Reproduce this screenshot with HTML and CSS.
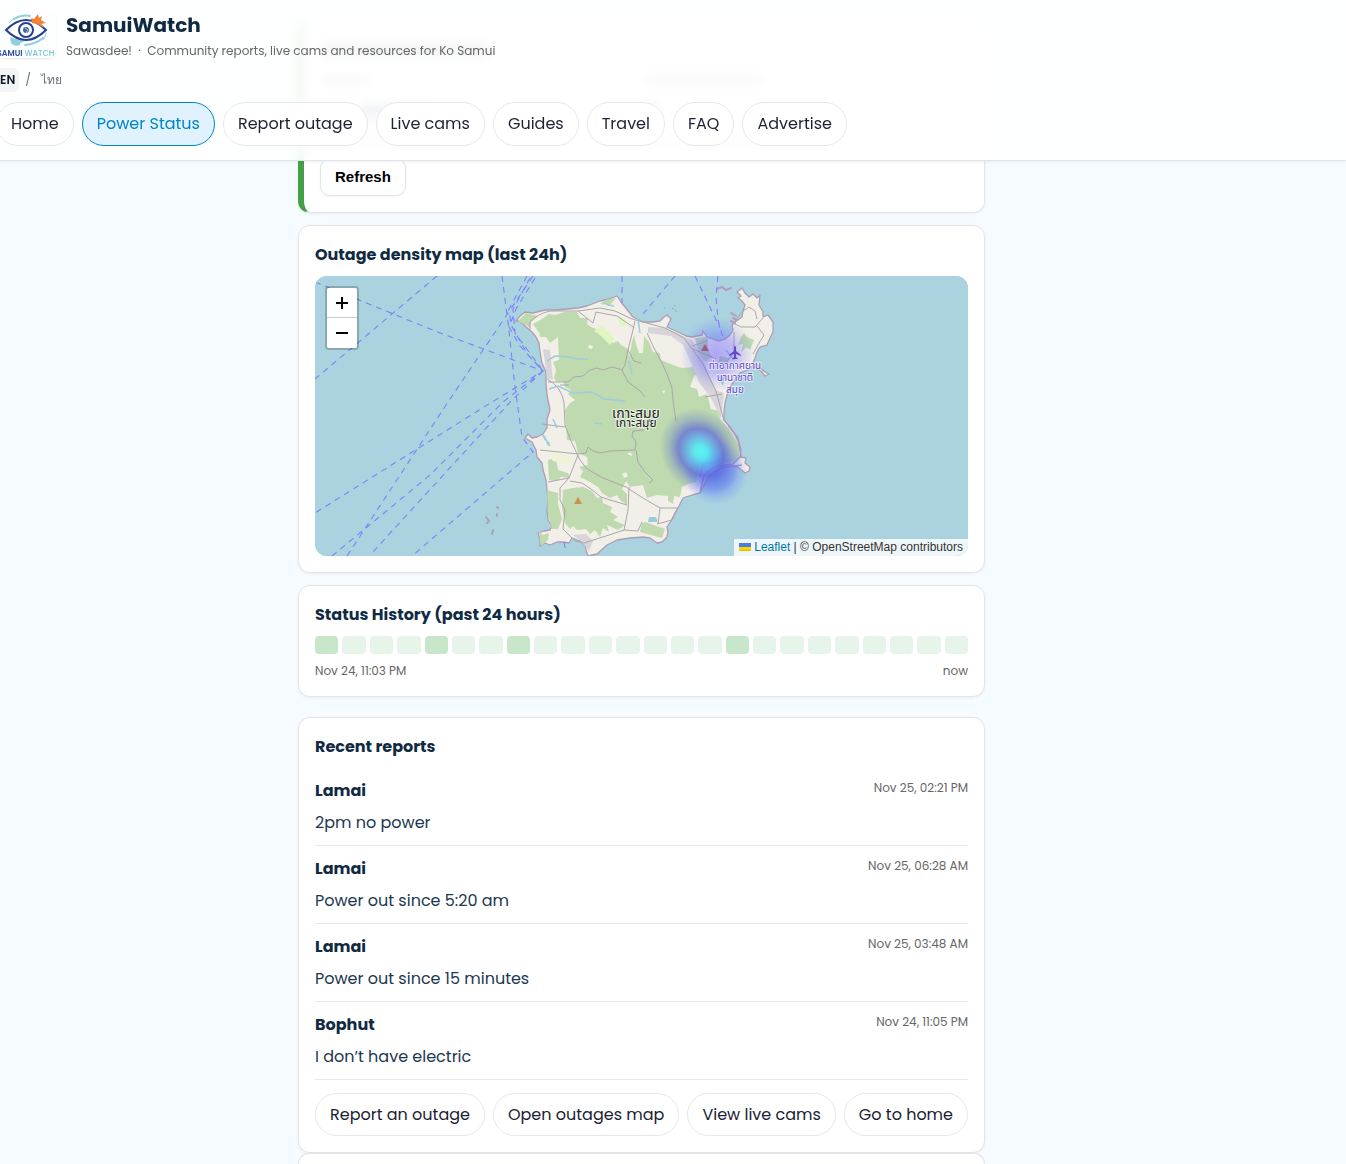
FILE: index.html
```html
<!DOCTYPE html>
<html lang="en">
<head>
<meta charset="utf-8">
<meta name="viewport" content="width=device-width, initial-scale=1">
<title>SamuiWatch</title>
<link rel="stylesheet" href="styles.css">
</head>
<body>
<header class="site-header">
  <div class="brand">
    <svg class="logo" viewBox="0 0 60 48" aria-hidden="true">
      <rect width="60" height="48" fill="#fdfeff"/>
      <g fill="none" stroke="#8fd0dc" stroke-linecap="round">
        <path d="M18 9Q26 4 34 6" stroke-width="2"/>
        <path d="M13 13Q17 8 22 7" stroke-width="1"/>
        <path d="M29 35Q40 34 47 28" stroke-width="2"/>
        <path d="M50 23Q50 27 47 30" stroke-width="1"/>
      </g>
      <path d="M14 27L29 32Q23 32 24 35Q18 37 15 33Z" fill="#8fd0dc"/>
      <path d="M10 20Q30 0 50 20Q30 40 10 20Z" fill="#fff" stroke="#25408f" stroke-width="2"/>
      <path d="M36 13L35 8L38 9L42 4L43 8L46 6L45 10L50 13L45 14L48 18L41 14Z" fill="#f58233"/>
      <circle cx="30" cy="20" r="7" fill="#fff" stroke="#25408f" stroke-width="2"/>
      <circle cx="30" cy="20" r="3" fill="#4b62a4"/>
      <path d="M29 18L32 20L30 23" fill="none" stroke="#8fd0dc"/>
      <text class="logo-text" x="1" y="46"><tspan fill="#2f4a9b">SAMUI</tspan> <tspan fill="#7cc5d6" font-weight="500">WATCH</tspan></text>
    </svg>
    <div class="brand-copy">
      <div class="brand-name">SamuiWatch</div>
      <div class="tagline">Sawasdee! &nbsp;·&nbsp; Community reports, live cams and resources for Ko Samui</div>
    </div>
  </div>
  <div class="langs"><a class="lang lang-on" href="#en">EN</a><span class="slash">/</span><a class="lang" href="#th">ไทย</a></div>
  <nav class="nav">
    <a class="pill" href="#home">Home</a>
    <a class="pill pill-on" href="#power">Power Status</a>
    <a class="pill" href="#report">Report outage</a>
    <a class="pill" href="#cams">Live cams</a>
    <a class="pill" href="#guides">Guides</a>
    <a class="pill" href="#travel">Travel</a>
    <a class="pill" href="#faq">FAQ</a>
    <a class="pill" href="#ads">Advertise</a>
  </nav>
</header>

<main class="page">
  <section class="card card-status">
    <div class="ghost" aria-hidden="true">
      <i class="g-title"></i>
      <i class="g-label"></i><i class="g-label g-wide"></i>
      <i class="g-value"></i><i class="g-value g-digit"></i>
      <i class="g-note"></i><i class="g-note"></i>
    </div>
    <button class="refresh" type="button">Refresh</button>
  </section>

  <section class="card">
    <h2>Outage density map (last 24h)</h2>
    <div class="map">
      <svg class="map-art" viewBox="315 276 653 280" preserveAspectRatio="xMidYMid slice" role="img" aria-label="Map of Ko Samui">
        <defs>
          <radialGradient id="hot"><stop offset="0" stop-color="#4ff8f4" stop-opacity=".92"/><stop offset=".16" stop-color="#4fecf4" stop-opacity=".86"/><stop offset=".36" stop-color="#58a4ee" stop-opacity=".76"/><stop offset=".54" stop-color="#5a62da" stop-opacity=".7"/><stop offset=".76" stop-color="#5a68d0" stop-opacity=".3"/><stop offset="1" stop-color="#5a68d0" stop-opacity="0"/></radialGradient>
          <radialGradient id="warm"><stop offset="0" stop-color="#5570ff" stop-opacity=".75"/><stop offset=".5" stop-color="#5c76ff" stop-opacity=".5"/><stop offset="1" stop-color="#6a8cff" stop-opacity="0"/></radialGradient>
          <radialGradient id="mild"><stop offset="0" stop-color="#6058ff" stop-opacity=".48"/><stop offset=".5" stop-color="#6460ff" stop-opacity=".36"/><stop offset="1" stop-color="#6b78ff" stop-opacity="0"/></radialGradient>
        </defs>
        <rect x="315" y="276" width="653" height="280" fill="#aad3df"/>
        <path fill="#f2efe9" stroke="#ad9db4" stroke-width="1.3" stroke-linejoin="round" d="M516 321L520 316L525 312L533 313L545 310L556 310L567 309L578 308L587 306L600 301L609 299L617 296L621 302L625 307L629 312L633 317L643 322L652 322L660 321L664 317L667 315L671 319L669 323L667 327L680 333L686 336L692 337L702 335L703 331L707 337L713 339L718 341L725 339L730 335L733 330L732 325L735 322L742 317L743 311L745 305L742 301L738 298L741 296L737 292L742 288L745 293L749 297L753 294L757 298L760 295L759 305L763 312L763 317L768 315L773 322L773 332L770 338L767 345L760 347L757 352L755 358L753 363L758 366L765 372L769 374L765 376L761 371L753 366L747 370L740 373L735 380L730 387L727 395L725 403L724 411L724 420L730 427L735 435L739 443L741 450L740 457L746 458L745 463L750 467L749 471L745 473L738 467L729 466L720 468L713 472L708 477L704 485L700 493L692 495L683 498L679 506L675 513L671 521L667 527L668 532L667 537L662 542L657 543L650 538L643 537L630 538L617 540L607 545L597 554L588 556L586 550L585 545L580 541L572 538L569 543L563 542L557 542L550 545L545 543L540 546L540 539L538 533L544 531L550 530L552 526L548 520L547 510L548 500L547 490L546 480L543 470L542 463L537 457L536 450L532 442L525 438L528 434L532 438L537 437L543 434L547 428L547 419L550 410L547 395L546 383L546 372L542 363L540 352L539 343L536 337L532 332L526 327L520 321Z"/>
        <g fill="#bedaae">
          <path d="M518 321L526 313L538 316L531 322L530 328L524 324ZM533 324L542 319L549 314L555 315L565 312L577 312L580 318L588 318L587 324L593 328L600 330L605 339L613 343L618 341L621 345L628 349L629 358L632 342L634 335L636 344L639 353L643 353L644 336L649 342L653 352L660 353L661 360L666 362L673 365L682 368L693 367L700 373L694 376L690 387L697 389L699 397L707 394L711 409L719 411L720 419L730 430L739 445L740 457L733 462L700 468L696 482L688 484L682 487L680 497L674 496L673 504L668 501L668 496L657 495L647 498L643 485L630 487L626 481L622 489L627 494L627 505L620 500L617 495L610 498L602 493L598 487L590 482L580 477L583 471L579 467L588 465L587 457L578 453L575 441L567 440L565 410L570 403L575 400L568 394L571 390L565 387L563 381L557 382L554 378L556 370L553 362L559 360L558 337L550 343L546 337L540 337L538 331Z"/>
          <path d="M563 490L573 488L583 487L592 491L597 498L602 497L603 503L612 507L610 512L618 517L613 520L625 525L618 530L607 525L609 532L603 528L600 537L595 530L590 534L586 529L577 530L573 526L570 529L565 523L562 508ZM547 490L558 493L558 504L562 519L558 529L552 529L548 514ZM642 523L645 522L665 529L662 538L640 532ZM539 532L543 535L549 533L548 540L541 546ZM548 460L556 458L558 470L568 473L570 478L561 477L557 481L549 480ZM741 337L744 333L747 337L754 340L750 350L746 347L741 353L743 344L738 345ZM605 300L616 298L610 305L600 304ZM695 338L708 337L708 350L712 356L706 362L699 357ZM720 356L729 358L726 365L718 363Z"/>
        </g>
        <path d="M589 345L593 346L592 349L588 348ZM534 331L540 333L538 337ZM662 391L665 390L664 394ZM622 474L626 472L628 476L624 478ZM627 454L631 452L632 456Z" fill="#f2efe9"/>
        <path d="M594 331L598 328L603 326L606 331L611 333L614 339L610 345L604 339L600 335ZM619 316L625 319L626 327L619 326Z" fill="#e0f6c0"/>
        <path d="M549 454L573 456L571 465L553 461Z" fill="#f0f3d8"/>
        <path d="M648 327L666 328L692 340L704 362L715 390L724 393L721 419L712 400L699 382L692 365L683 345L671 336L648 333ZM543 349L550 350L553 380L547 378ZM573 535L586 534L593 541L589 551L581 541Z" fill="#d8d5da"/>
        <g fill="none" stroke="#aba6aa" stroke-width="1" stroke-linejoin="round">
          <path d="M530 330V322Q537 314 550 311H578L600 308L615 311L632 319L665 328L684 338L703 364L716 391L724 421M578 311L593 323L596 312L617 316L633 327M635 321L632 334L628 350M647 333L654 348L662 363L667 374L672 388L673 401L676 421M628 350L634 361L641 363M628 350L625 365L622 370L628 382L639 390L645 397M623 370L612 367L603 370L597 368L590 370L583 376L574 377L568 382L559 382L548 382M547 379Q562 387 564 403L565 425L571 441L580 460L587 469L603 478L626 487L643 498L660 508H678M560 385H569M542 424L565 427M540 450L578 454L586 453L588 447L593 451L600 453L610 451L635 450L636 442L632 436L633 431L644 430M636 450L638 462L645 472L653 480L649 483M570 481L582 483L591 489L601 497L610 500L627 505M548 482L569 478L578 455M569 478L560 488L560 500L565 510L563 529L575 541L584 543L609 535L624 530L628 510L629 487M624 530L638 531L642 522M660 508L658 524M678 508L672 520L657 524"/>
          <path d="M734 332V351L725 365M733 323L741 327H755L763 318M735 321L742 312L749 307L755 311L757 319M757 326L764 335L758 345L753 354M692 346L707 341M693 349L716 359M705 397L722 394"/>
        </g>
        <path d="M700 493L704 475L716 466L733 464L741 456L738 438L728 425M700 477L703 464L720 460M720 468L742 465" fill="none" stroke="#b396c3" stroke-width="1.5"/>
        <path d="M547 361L555 356L568 357L578 359L588 359M549 389L558 386L573 393L592 392L604 399L625 401M604 302L608 305L614 306M638 319L640 333M629 361L632 374M553 419L557 428M543 435L550 446M595 423L602 424M726 350L734 360" fill="none" stroke="#9dccdd" stroke-width="1.5"/>
        <path d="M649 517H656L658 522H648ZM718 376L725 374L723 386ZM542 435L546 437L545 441ZM546 442L550 442L548 446Z" fill="#9dccdd"/>
        <path d="M664 307L667 310M672 308L677 312M674 305L676 307" stroke="#6fb5d8" stroke-dasharray="2 2"/>
        <path d="M717 289L722 287L726 290L731 288M731 313L736 316M737 320L733 318M731 321L735 323M486 517L489 521L487 523M497 507L498 508M497 514L497 516M493 530L492 534" fill="none" stroke="#b09fba" stroke-width="2" stroke-linecap="round"/>
        <g fill="none" stroke="#7c82fa" stroke-width="1.1" stroke-dasharray="6 5">
          <path d="M315 282L435 331L543 371L492 402L315 513M437 276L315 379M533 276L502 322L448 402L347 556M543 371L503 402L430 475L332 556M543 371L512 400L372 553M502 276L508 322L515 387L522 437L533 452L412 556"/>
          <path d="M527 276L509 309L511 325L528 355L543 371M530 278L513 309L515 333L543 371M535 278L516 309L509 327L520 346L543 371M622 276V303M675 276L643 314M695 276L720 328M718 276L716 296L718 320L723 338M564 542L566 552"/>
        </g>
        <circle cx="717" cy="354" r="37" fill="url(#mild)"/>
        <circle cx="716" cy="473" r="32" fill="url(#warm)"/>
        <ellipse cx="701" cy="452" rx="39" ry="46" transform="rotate(-36 701 452)" fill="url(#hot)"/>
        <path d="M574 504L578 497L582 504Z" fill="#d08f55"/>
        <path d="M701 351L705 344L709 351Z" fill="#9d5b83"/>
        <path d="M734 347Q735 345 736 347V351L741 355V356L736 354V357L738 359H732L734 357V354L729 356V355L734 351Z" fill="#6547cb"/>
        <g class="map-label" text-anchor="middle">
          <text class="island" x="636" y="418">เกาะสมุย</text>
          <text class="island-small" x="636" y="427">เกาะสมุย</text>
          <g class="airport"><text x="735" y="369">ท่าอากาศยาน</text><text x="735" y="381">นานาชาติ</text><text x="735" y="393">สมุย</text></g>
        </g>
      </svg>
      <div class="zoom"><button type="button" aria-label="Zoom in"><svg viewBox="0 0 14 14" aria-hidden="true"><path d="M7 1V13M1 7H13"/></svg></button><button type="button" aria-label="Zoom out"><svg viewBox="0 0 14 14" aria-hidden="true"><path d="M1 7H13"/></svg></button></div>
      <div class="credit"><svg class="flag" viewBox="0 0 12 8" aria-hidden="true"><path fill="#4c7be1" d="M0 0h12v4H0z"/><path fill="#ffd500" d="M0 4h12v3H0z"/><path fill="#e0bc00" d="M0 7h12v1H0z"/></svg><a href="#leaflet">Leaflet</a> | © OpenStreetMap contributors</div>
    </div>
  </section>

  <section class="card card-history">
    <h2>Status History (past 24 hours)</h2>
    <div class="cells" aria-hidden="true"><i class="hit"></i><i></i><i></i><i></i><i class="hit"></i><i></i><i></i><i class="hit"></i><i></i><i></i><i></i><i></i><i></i><i></i><i></i><i class="hit"></i><i></i><i></i><i></i><i></i><i></i><i></i><i></i><i></i></div>
    <div class="range"><span>Nov 24, 11:03 PM</span><span>now</span></div>
  </section>

  <section class="card card-reports">
    <h2>Recent reports</h2>
    <ul class="reports">
      <li><div class="report-top"><strong>Lamai</strong><time>Nov 25, 02:21 PM</time></div><p>2pm no power</p></li>
      <li><div class="report-top"><strong>Lamai</strong><time>Nov 25, 06:28 AM</time></div><p>Power out since 5:20 am</p></li>
      <li><div class="report-top"><strong>Lamai</strong><time>Nov 25, 03:48 AM</time></div><p>Power out since 15 minutes</p></li>
      <li><div class="report-top"><strong>Bophut</strong><time>Nov 24, 11:05 PM</time></div><p>I don’t have electric</p></li>
    </ul>
    <div class="actions">
      <a class="pill" href="#report">Report an outage</a>
      <a class="pill" href="#map">Open outages map</a>
      <a class="pill" href="#cams">View live cams</a>
      <a class="pill" href="#home">Go to home</a>
    </div>
  </section>
  <section class="card card-next"></section>
</main>
</body>
</html>
```

FILE: styles.css
```css
* { box-sizing: border-box; }
body {
  margin: 0;
  background: #f6fbff;
  color: #102a43;
  font: 16px/26px Poppins, Inter, "Noto Sans", sans-serif;
}
a { color: inherit; text-decoration: none; }
h2 { margin: 0 0 8px; font-size: 16px; line-height: 26px; font-weight: 700; }

.site-header {
  position: fixed;
  z-index: 10;
  top: 0;
  left: 0;
  right: 0;
  padding: 10px 0 14px;
  background: rgba(255, 255, 255, .9);
  border-bottom: 1px solid #dfe3ea;
  box-shadow: 0 1px 3px rgba(15, 23, 42, .06);
  -webkit-backdrop-filter: blur(6px);
  backdrop-filter: blur(6px);
}
.brand, .langs, .nav { display: flex; margin-left: -4px; }
.brand { gap: 10px; }
.logo { width: 60px; height: 48px; border-radius: 8px; box-shadow: 0 1px 2px rgba(15, 23, 42, .1); }
.logo-text { font: 600 8px Poppins, Inter, sans-serif; }
.brand-name { font-size: 20px; line-height: 30px; font-weight: 700; }
.tagline { font-size: 12px; line-height: 22px; color: #666; }
.langs { align-items: center; gap: 6px; margin-top: 6px; font-size: 12px; line-height: 24px; color: #6b7280; }
.lang { padding: 0 4px; }
.lang-on { background: #f3f4f6; border-radius: 6px; color: #111827; font-weight: 600; }
.nav { gap: 8px; margin-top: 10px; }
.pill {
  padding: 9px 14px;
  border: 1px solid #e5e7eb;
  border-radius: 22px;
  background: #fff;
  color: #1a2233;
  line-height: 24px;
  white-space: nowrap;
}
.pill-on { background: #e0f2fe; border-color: #0284c7; color: #0284c7; }

.page { max-width: 750px; margin: 0 auto; padding: 19px 63px 0 0; }
.card {
  margin-bottom: 12px;
  padding: 16px;
  background: #fff;
  border: 1px solid #e2e6eb;
  border-radius: 12px;
  box-shadow: 0 1px 3px rgba(15, 23, 42, .06);
}
.card-status { border-left: 6px solid #43a047; }
.ghost { display: grid; grid-template-columns: 1fr 1fr; row-gap: 20px; height: 122px; align-content: start; }
.ghost i { display: block; width: 50px; height: 8px; background: #bbb; }
.ghost .g-title { grid-column: 1 / 3; width: 170px; height: 12px; margin-top: 8px; background: #7b8796; }
.ghost .g-wide, .ghost .g-note { width: 120px; }
.ghost .g-value { width: 70px; height: 14px; margin-left: 40px; background: #7480a6; }
.ghost .g-digit { width: 14px; margin-left: 0; }
.ghost .g-note { background: #ddd; }
.refresh {
  display: block;
  height: 38px;
  padding: 0 14px;
  border: 1px solid #e2e6eb;
  border-radius: 10px;
  background: #fff;
  color: #000;
  font: 700 15px/20px "Liberation Sans", Arial, sans-serif;
  box-shadow: 0 1px 2px rgba(15, 23, 42, .05);
}

.map { position: relative; height: 280px; border-radius: 12px; overflow: hidden; background: #aad3df; }
.map-art { display: block; width: 100%; height: 100%; }
.map-label { font-family: "Noto Sans Thai", "Noto Sans", sans-serif; paint-order: stroke; stroke: #fff; stroke-opacity: .6; stroke-width: 2px; }
.island { font-size: 14px; fill: #222; }
.island-small { font-size: 12px; fill: #222; }
.airport { font-size: 10px; fill: #6547cb; }
.zoom {
  position: absolute;
  top: 10px;
  left: 10px;
  display: flex;
  flex-direction: column;
  border: 2px solid rgba(0, 0, 0, .2);
  border-radius: 4px;
  background-clip: padding-box;
}
.zoom button { display: grid; place-items: center; width: 30px; height: 30px; padding: 0; border: 0; background: #fff; }
.zoom button:first-child { border-bottom: 1px solid #ccc; border-radius: 2px 2px 0 0; }
.zoom button:last-child { border-radius: 0 0 2px 2px; }
.zoom svg { width: 14px; height: 14px; fill: none; stroke: #000; stroke-width: 2; }
.credit {
  position: absolute;
  right: 0;
  bottom: 0;
  padding: 0 5px;
  background: rgba(255, 255, 255, .8);
  color: #333;
  font: 12px/17px "Liberation Sans", Arial, sans-serif;
}
.credit a { color: #0078a8; }
.flag { width: 12px; height: 8px; margin-right: 3px; }

.cells { display: grid; grid-template-columns: repeat(24, 1fr); gap: 4px; }
.cells i { height: 18px; border-radius: 4px; background: #e6f4e9; }
.cells .hit { background: #c8e6c9; }
.card-history { margin-bottom: 20px; }
.range { display: flex; justify-content: space-between; margin-top: 8px; font-size: 12px; line-height: 18px; color: #666; }

.card-reports { margin-bottom: 0; }
.reports { margin: 0; padding: 0; list-style: none; }
.reports li { padding: 10px 0 9px; border-bottom: 1px solid #e8eaed; }
.reports p { margin: 6px 0 0; color: #1c3850; }
.report-top { display: flex; justify-content: space-between; align-items: flex-start; }
.report-top time { font-size: 12px; line-height: 20px; color: #666; }
.actions { display: flex; gap: 8px; margin-top: 13px; }
.actions .pill { line-height: 23px; }
.card-next { margin: 0; padding: 5px 16px; border-bottom: 0; border-radius: 12px 12px 0 0; }
```
